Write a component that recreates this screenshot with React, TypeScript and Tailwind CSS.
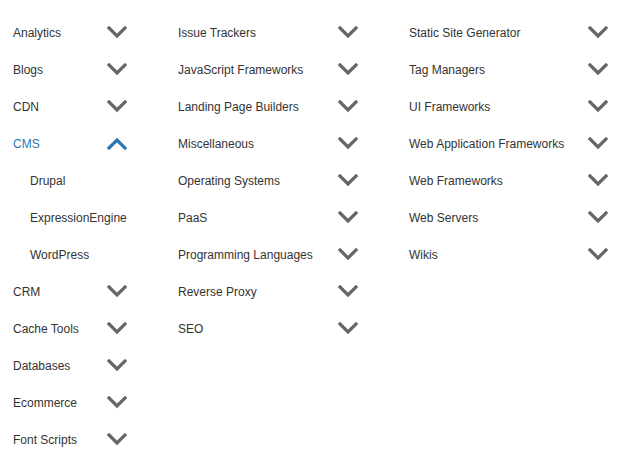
import React from "react";

const Chevron = ({ up = false }: { up?: boolean }) => (
  <svg width="20" height="13" viewBox="0 0 20 13" className={up ? "text-[#2a78b0]" : "text-[#666666]"}>
    {up ? (
      <polyline points="2,11 10,3 18,11" fill="none" stroke="currentColor" strokeWidth="3.2" strokeLinecap="square" />
    ) : (
      <polyline points="2,2 10,10 18,2" fill="none" stroke="currentColor" strokeWidth="3.2" strokeLinecap="square" />
    )}
  </svg>
);

type Item = { label: string; open?: boolean; sub?: boolean; noIcon?: boolean };

const col1: Item[] = [
  { label: "Analytics" },
  { label: "Blogs" },
  { label: "CDN" },
  { label: "CMS", open: true },
  { label: "Drupal", sub: true, noIcon: true },
  { label: "ExpressionEngine", sub: true, noIcon: true },
  { label: "WordPress", sub: true, noIcon: true },
  { label: "CRM" },
  { label: "Cache Tools" },
  { label: "Databases" },
  { label: "Ecommerce" },
  { label: "Font Scripts" },
];
const col2: Item[] = [
  { label: "Issue Trackers" },
  { label: "JavaScript Frameworks" },
  { label: "Landing Page Builders" },
  { label: "Miscellaneous" },
  { label: "Operating Systems" },
  { label: "PaaS" },
  { label: "Programming Languages" },
  { label: "Reverse Proxy" },
  { label: "SEO" },
];
const col3: Item[] = [
  { label: "Static Site Generator" },
  { label: "Tag Managers" },
  { label: "UI Frameworks" },
  { label: "Web Application Frameworks" },
  { label: "Web Frameworks" },
  { label: "Web Servers" },
  { label: "Wikis" },
];

const Column = ({ items, width }: { items: Item[]; width: string }) => (
  <div className={`flex flex-col ${width}`}>
    {items.map((it) => (
      <div key={it.label} className="flex h-[37px] items-center justify-between">
        <span
          className={`${it.sub ? "pl-[17px]" : ""} ${it.open ? "text-[#2a78b0]" : "text-[#333333]"} whitespace-nowrap`}
        >
          {it.label}
        </span>
        {!it.noIcon && <Chevron up={it.open} />}
      </div>
    ))}
  </div>
);

export default function App() {
  return (
    <div
      className="w-[620px] h-[465px] bg-white overflow-hidden flex pl-[13px] pt-[14px] text-[12px]"
      style={{ fontFamily: '"Liberation Sans", Arial, sans-serif' }}
    >
      <Column items={col1} width="w-[114px]" />
      <div className="w-[51px]" />
      <Column items={col2} width="w-[180px]" />
      <div className="w-[51px]" />
      <Column items={col3} width="w-[199px]" />
    </div>
  );
}
